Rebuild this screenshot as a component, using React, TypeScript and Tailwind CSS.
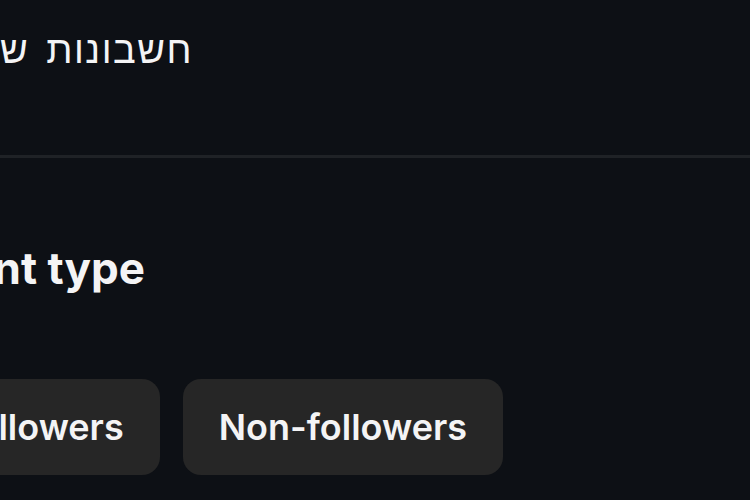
export default function App() {
  return (
    <div className="h-[500px] w-[750px] overflow-hidden bg-[#0d1015] font-['Inter','Liberation_Sans',sans-serif] text-[#f4f4f5]">
      <div className="flex h-[155px] items-start pt-[26px]">
        <div
          dir="rtl"
          className="w-[193px] whitespace-nowrap font-['Liberation_Sans','DejaVu_Sans',sans-serif] text-[38px] leading-[48px] tracking-[1.5px] [word-spacing:5px]"
        >
          חשבונות שאינם עוקבים
        </div>
      </div>
      <div className="h-[3px] bg-[#1f2226]" />
      <div className="flex pt-[80px]">
        <h2 className="flex w-[145px] justify-end whitespace-nowrap text-[44px] font-bold leading-[60px]">
          Account type
        </h2>
      </div>
      <div className="mt-[81px] flex w-[503px] justify-end gap-[23px]">
        <button className="h-[96px] shrink-0 whitespace-nowrap rounded-[18px] bg-[#262626] px-[36px] text-[36px] font-semibold">
          Followers
        </button>
        <button className="h-[96px] shrink-0 whitespace-nowrap rounded-[18px] bg-[#262626] px-[36px] text-[36px] font-semibold">
          Non-followers
        </button>
      </div>
    </div>
  );
}
